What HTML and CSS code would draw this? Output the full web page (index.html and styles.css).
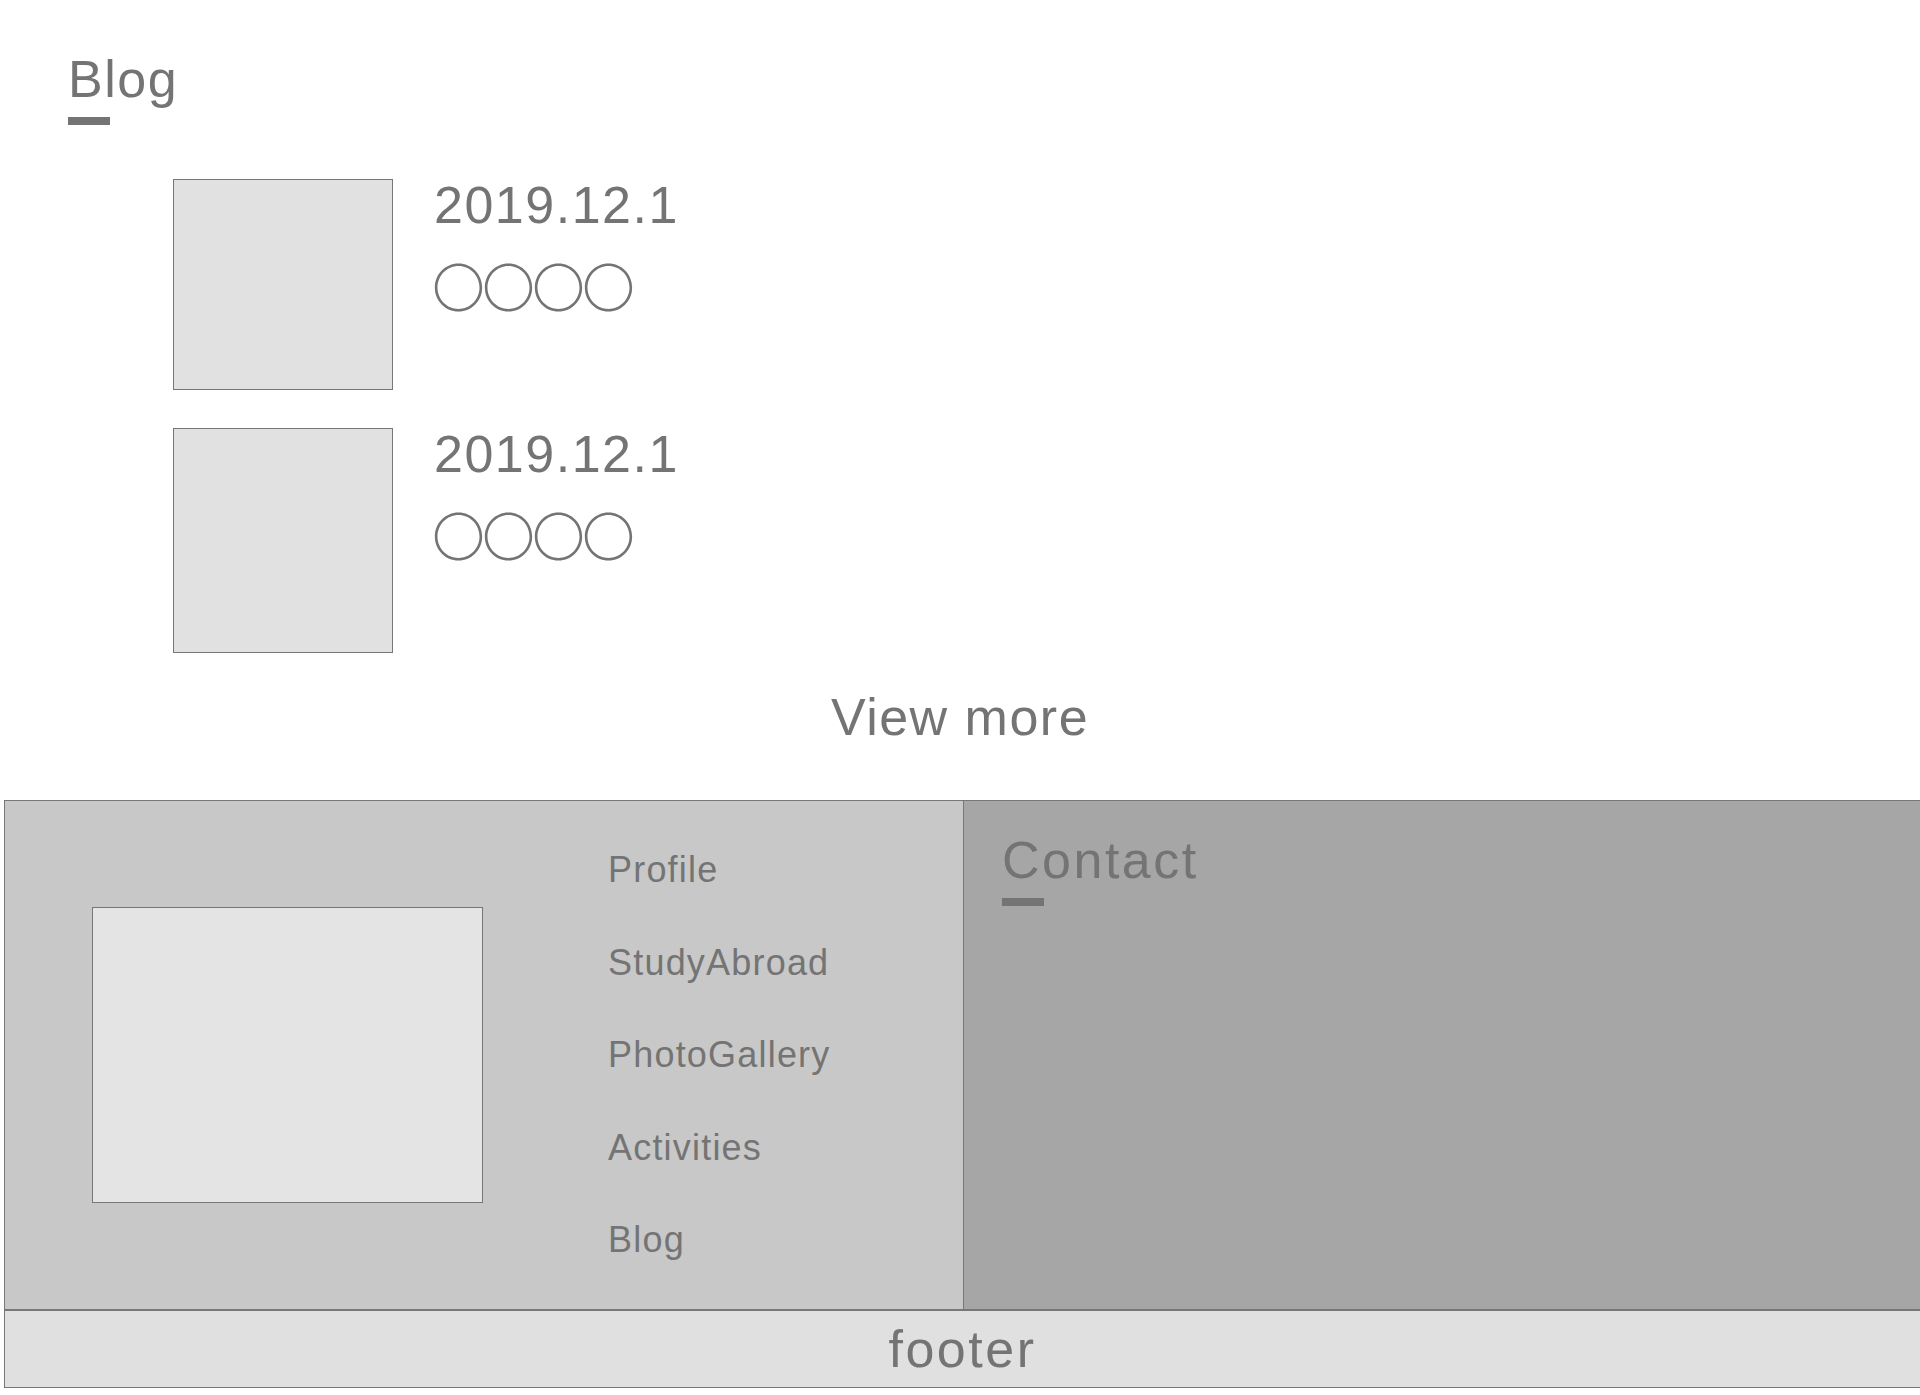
FILE: index.html
```html
<!DOCTYPE html>
<html lang="ja">
<head>
  <meta charset="UTF-8" />
  <title>Blog</title>
  <link rel="stylesheet" href="styles.css">
</head>
<body>

<section class="blog">
  <h2 class="section-title">Blog</h2>
  <ul class="post-list">
    <li class="post">
      <div class="post-thumb"></div>
      <div class="post-body">
        <p class="post-date">2019.12.1</p>
        <p class="post-title">〇〇〇〇</p>
      </div>
    </li>
    <li class="post">
      <div class="post-thumb post-thumb-tall"></div>
      <div class="post-body">
        <p class="post-date">2019.12.1</p>
        <p class="post-title">〇〇〇〇</p>
      </div>
    </li>
  </ul>
  <a class="view-more" href="#">View more</a>
</section>

<div class="site-bottom">
  <div class="info">
    <div class="info-left">
      <div class="info-photo"></div>
      <ul class="info-nav">
        <li><a href="#">Profile</a></li>
        <li><a href="#">StudyAbroad</a></li>
        <li><a href="#">PhotoGallery</a></li>
        <li><a href="#">Activities</a></li>
        <li><a href="#">Blog</a></li>
      </ul>
    </div>
    <div class="contact">
      <h2 class="section-title">Contact</h2>
    </div>
  </div>
  <footer class="footer">footer</footer>
</div>

</body>
</html>
```

FILE: styles.css
```css
body {
  margin: 0;
  font-family: "Liberation Sans", Arial, sans-serif;
  color: #747474;
  background-color: white;
}

a {
  color: inherit;
  text-decoration: none;
}

ul {
  list-style: none;
  margin: 0;
  padding: 0;
}

p {
  margin: 0;
}

/* titulo com traco embaixo */
.section-title {
  margin: 0;
  font-size: 52px;
  font-weight: normal;
  line-height: 1;
  letter-spacing: 1.5px;
}

.section-title::after {
  content: "";
  display: block;
  width: 42px;
  height: 8px;
  margin-top: 12px;
  background-color: #747474;
}

.blog {
  padding: 53px 0 0 68px;
}

.post-list {
  display: flex;
  flex-direction: column;
  gap: 38px;
  margin: 54px 0 0 105px;
}

.post {
  display: flex;
  align-items: flex-start;
  gap: 41px;
}

.post-thumb {
  width: 218px;
  height: 209px;
  border: 1px solid #777;
  background-color: #e1e1e1;
}

.post-thumb-tall {
  height: 223px;
}

.post-date {
  font-size: 52px;
  line-height: 1;
  letter-spacing: 1.5px;
}

.post-title {
  margin: 28px 0 0 -2px;
  font-family: "Noto Sans CJK JP", sans-serif;
  font-size: 53px;
  font-weight: 300;
  line-height: 1;
  letter-spacing: -3px;
}

.view-more {
  display: block;
  width: fit-content;
  margin: 38px auto 0;
  padding-right: 68px;
  font-size: 52px;
  line-height: 1;
  letter-spacing: 1.5px;
}

.site-bottom {
  margin-top: 57px;
  margin-left: 4px;
}

.info {
  display: flex;
  height: 508px;
  border-top: 1px solid #777;
  border-bottom: 1px solid #777;
}

.info-left {
  display: flex;
  align-items: flex-start;
  width: 958px;
  border-left: 1px solid #777;
  border-right: 1px solid #777;
  background-color: #c8c8c8;
}

.info-photo {
  width: 389px;
  height: 294px;
  margin: 106px 0 0 87px;
  border: 1px solid #777;
  background-color: #e4e4e4;
}

.info-nav {
  display: flex;
  flex-direction: column;
  gap: 56.5px;
  margin-left: 125px;
  padding-top: 51px;
  font-size: 36px;
  line-height: 1;
  letter-spacing: 1.2px;
}

.contact {
  flex: 1;
  padding: 33px 0 0 38px;
  background-color: #a6a6a6;
}

.contact .section-title {
  letter-spacing: 2.5px;
}

.footer {
  padding: 12px 0;
  border-top: 1px solid #777;
  border-bottom: 1px solid #777;
  border-left: 1px solid #777;
  background-color: #e0e0e0;
  font-size: 52px;
  line-height: 1;
  letter-spacing: 2.5px;
  text-align: center;
}
```
